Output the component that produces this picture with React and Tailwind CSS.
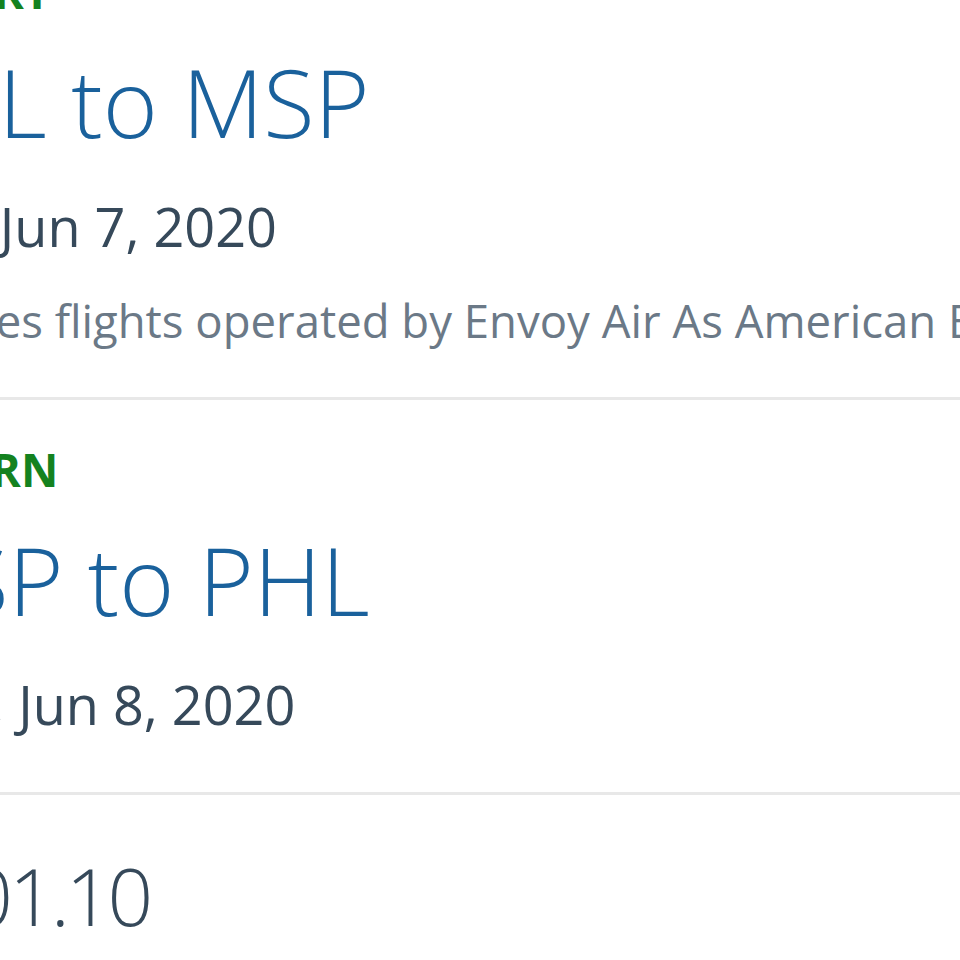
const trips = [
  {
    label: 'DEPART',
    route: 'PHL to MSP',
    date: 'Sun, Jun 7, 2020',
    note: 'Includes flights operated by Envoy Air As American Eagle',
  },
  {
    label: 'RETURN',
    route: 'MSP to PHL',
    date: 'Mon, Jun 8, 2020',
  },
];

function TripBlock({ trip, first }) {
  return (
    <div className={first ? '-mt-[32px]' : 'pt-[46px]'}>
      <div className="-ml-[3px] text-[46px] leading-none font-bold text-[#14821f]">{trip.label}</div>
      <div className="mt-[41px] text-[94px] leading-none font-light text-[#1a619c]">{trip.route}</div>
      <div className="mt-[50px] text-[54px] leading-none text-[#36495a]">{trip.date}</div>
      {trip.note && (
        <div className="mt-[45px] -ml-[10px] text-[45.5px] leading-none text-[#6b7987]">{trip.note}</div>
      )}
      <div className={`${trip.note ? 'mt-[53px]' : 'mt-[61px]'} h-[3px] bg-[#e8e8e8]`} />
    </div>
  );
}

export default function App() {
  return (
    <div
      className="w-[960px] h-[960px] overflow-hidden bg-white"
      style={{ fontFamily: '"Open Sans", "Noto Sans", sans-serif' }}
    >
      <div className="-ml-[124px] w-[1084px] whitespace-nowrap">
        {trips.map((trip, i) => (
          <TripBlock key={trip.label} trip={trip} first={i === 0} />
        ))}
        <div className="mt-[60px] ml-[8px] text-[80px] leading-none font-light tracking-[-0.05em] text-[#36495a]">
          $201.10
        </div>
      </div>
    </div>
  );
}
